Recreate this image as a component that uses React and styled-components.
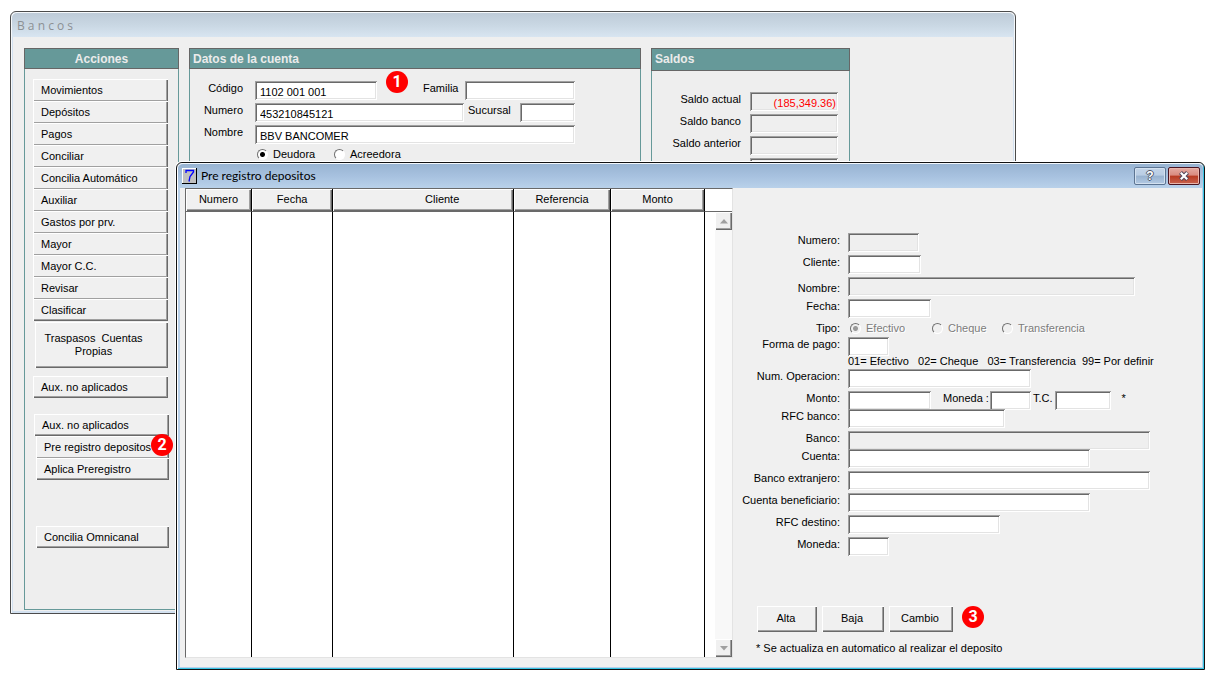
import React from 'react';
import styled, { createGlobalStyle, css } from 'styled-components';

const uiFont = '"Liberation Sans", Arial, sans-serif';

const raised = css`
  box-shadow: inset 1px 1px 0 #fff, inset -1px -1px 0 #696969, inset -2px -2px 0 #a0a0a0;
`;
const sunken = css`
  box-shadow: inset 1px 1px 0 #a0a0a0, inset -1px -1px 0 #fff,
    inset 2px 2px 0 #696969, inset -2px -2px 0 #e3e3e3;
`;

const GlobalStyle = createGlobalStyle`
  * { box-sizing: border-box; }
  body { margin: 0; background: #fff; color: #000; }
  button, input { font: inherit; color: inherit; }
`;

const Desktop = styled.main`
  position: relative;
  min-height: 100vh;
  overflow: hidden;
`;

/* ---------- Bancos window ---------- */

const BankWindow = styled.section`
  position: absolute;
  top: 11px;
  left: 10px;
  right: 199px;
  border: 1px solid #4b4b4b;
  border-radius: 6px 6px 0 0;
  background: #efefef;
  box-shadow: inset 1px 1px 0 #f5f8fb, inset 2px 0 0 #d3e1f0, inset -1px 0 0 #f5f8fb,
    inset -2px -2px 0 #d3e1f0;
  font: 11px/16px ${uiFont};
`;

const BankTitle = styled.h1`
  margin: 1px 1px 0;
  height: 24px;
  padding: 0 5px;
  border-radius: 5px 5px 0 0;
  background: linear-gradient(#becbd8, #c9d7e3 50%, #d8e5f1);
  color: #8c9094;
  font: 12px/26px "Open Sans", sans-serif;
  white-space: pre;
`;

const BankBody = styled.div`
  display: grid;
  grid-template-columns: 155px minmax(0, 1fr) 199px;
  gap: 10px;
  padding: 11px 165px 3px 13px;
`;

const Panel = styled.section`
  border: 1px solid #669999;
  border-top: 0;
  background: #eee;
`;

const PanelTitle = styled.h2`
  margin: 0 -1px;
  height: ${(p) => (p.$tall ? 23 : 21)}px;
  padding: 0 3px;
  border: 1px solid #666;
  background: #669999;
  color: #ebebeb;
  font: bold 12px/20px ${uiFont};
  text-align: ${(p) => (p.$center ? 'center' : 'left')};
`;

const ActionList = styled.nav`
  display: flex;
  flex-direction: column;
  padding: 10px 9px 61px 8px;
`;

const ActionGroup = styled.div`
  position: relative;
  display: flex;
  flex-direction: column;
  margin: 0 ${(p) => (p.$shift ? 0 : 1)}px ${(p) => p.$after || 0}px ${(p) => p.$indent || 0}px;
`;

const ActionButton = styled.button`
  height: ${(p) => (p.$tall ? 46 : 22)}px;
  padding: 0 ${(p) => (p.$tall ? 24 : 8)}px 0 8px;
  border: 0;
  background: #f0f0f0;
  text-align: ${(p) => (p.$tall ? 'center' : 'left')};
  line-height: ${(p) => (p.$tall ? 13 : 22)}px;
  white-space: pre;
  ${raised}
  &:not(:last-of-type) {
    box-shadow: inset 1px 1px 0 #fff, inset -1px 0 0 #696969, inset -2px -1px 0 #a0a0a0;
  }
`;

const Badge = styled.span`
  display: block;
  width: 22px;
  height: 22px;
  border-radius: 50%;
  background: #f00;
  color: #fff;
  font: bold 16px/21px Roboto, sans-serif;
  text-align: center;
`;

const ActionBadge = styled(Badge)`
  position: absolute;
  top: -2px;
  right: -4px;
`;

const AccountBadge = styled(Badge)`
  position: absolute;
  top: -10px;
  left: 194px;
`;

const AccountForm = styled.form`
  position: relative;
  display: flex;
  flex-direction: column;
  margin: 12px 0 0 2px;
`;

const AccountRow = styled.div`
  display: grid;
  grid-template-columns: 51px ${(p) => p.$cols};
  column-gap: 12px;
  height: 22px;
  align-items: start;
`;

const FieldLabel = styled.label`
  text-align: right;
  line-height: 15px;
  white-space: nowrap;
`;

const FamilyField = styled.div`
  display: grid;
  grid-template-columns: 32px 110px;
  justify-content: space-between;
  margin-left: 34px;
`;

const BranchFields = styled.div`
  display: grid;
  grid-template-columns: 209px 1fr 55px;
  column-gap: 4px;
  ${FieldLabel} { text-align: left; }
`;

const Field = styled.input`
  width: ${(p) => (p.$width ? `${p.$width}px` : '100%')};
  min-width: 0;
  height: 19px;
  padding: 2px 2px 0 5px;
  border: 0;
  border-radius: 0;
  outline: 0;
  background: #fff;
  text-align: ${(p) => (p.$right ? 'right' : 'left')};
  ${sunken}
  &:read-only { background: #efefef; }
`;

const RedField = styled(Field)`
  color: #f00;
`;

const RadioRow = styled.div`
  display: grid;
  grid-template-columns: ${(p) => p.$cols};
  padding-left: ${(p) => p.$indent}px;
`;

const RadioLabel = styled.label`
  display: flex;
  align-items: center;
  gap: 5px;
  height: 14px;
  ${(p) => p.$disabled && css`color: #7c7c7c; text-shadow: 1px 1px 0 #fff;`}
`;

const Radio = styled.input.attrs({ type: 'radio' })`
  appearance: none;
  width: 11px;
  height: 11px;
  margin: 0;
  border: 1px solid;
  border-color: #707070 #fff #fff #707070;
  border-radius: 50%;
  background: ${(p) => (p.disabled ? '#f0f0f0' : '#fff')};
  &:checked {
    background: radial-gradient(circle, ${(p) => (p.disabled ? '#999' : '#000')} 2px, transparent 3px),
      ${(p) => (p.disabled ? '#f0f0f0' : '#fff')};
  }
`;

const BalanceList = styled.form`
  display: grid;
  grid-template-columns: 1fr 88px;
  grid-auto-rows: 22px;
  column-gap: 9px;
  align-items: start;
  padding: 21px 11px 0;
`;

/* ---------- Pre registro dialog ---------- */

const Dialog = styled.section`
  position: absolute;
  top: 162px;
  left: 176px;
  right: 10px;
  border: 1px solid #111;
  border-radius: 6px 6px 0 0;
  background: #f0f0f0;
  box-shadow: 0 0 0 1px #fff, inset 1px 0 0 #fff, inset -1px -1px 0 #38c4e4,
    inset 3px 0 0 #b9d1ea, inset -2px -2px 0 #b9d1ea;
  font: 11px/15px ${uiFont};
`;

const DialogBar = styled.header`
  display: flex;
  align-items: center;
  height: 25px;
  margin: 0 1px;
  padding: 0 3px 0 4px;
  border-top: 1px solid #f2f7fc;
  border-radius: 5px 5px 0 0;
  background: linear-gradient(#98b4d2, #a7c1df 50%, #b9d1ea);
`;

const DialogTitle = styled.h2`
  flex: 1;
  margin: 0 0 0 4px;
  font: 12px/16px Lato, sans-serif;
`;

const CaptionButton = styled.button`
  display: flex;
  align-items: center;
  justify-content: center;
  width: 32px;
  height: 18px;
  margin-left: 2px;
  padding: 0;
  border: 1px solid ${(p) => (p.$close ? '#4b1420' : '#5c7492')};
  border-radius: 2px;
  color: #fff;
  background: ${(p) =>
    p.$close
      ? 'linear-gradient(#e5aaa1, #d98a7f 45%, #b83a22 50%, #c9634f)'
      : 'linear-gradient(#c3d4e8, #b9cde4 45%, #98b2cf 50%, #b3cae4)'};
  box-shadow: inset 0 0 0 1px ${(p) => (p.$close ? '#e9b5ac' : '#d3e1f0')};
`;

const HelpMark = styled.span`
  font: bold 12px/14px ${uiFont};
  text-shadow: 1px 0 #50586a, -1px 0 #50586a, 0 1px #50586a, 0 -1px #50586a;
`;

const DialogBody = styled.div`
  display: grid;
  grid-template-columns: minmax(0, 548fr) minmax(0, 471fr);
  padding: 0 0 11px 8px;
`;

const ListPane = styled.div`
  display: grid;
  grid-template-columns: minmax(0, 1fr) 27px;
  border: 1px solid;
  border-color: #696969 #e3e3e3 #e3e3e3 #696969;
  background: #fff;
`;

const DepositTable = styled.table`
  width: 100%;
  height: 100%;
  table-layout: fixed;
  border-collapse: separate;
  border-spacing: 0;
`;

const HeadCell = styled.th`
  width: ${(p) => p.$share}%;
  height: 23px;
  padding: 0 0 2px ${(p) => p.$pad || 0}px;
  border-right: 1px solid #000;
  border-bottom: 1px solid #696969;
  background: #f0f0f0;
  box-shadow: inset 1px 1px 0 #fff, inset -1px -1px 0 #696969, inset -2px -2px 0 #a0a0a0;
  font-weight: normal;
`;

const BodyCell = styled.td`
  padding: 0;
  border-right: 1px solid #000;
`;

const ScrollColumn = styled.div`
  display: flex;
  flex-direction: column;
  padding-top: 22px;
`;

const ScrollTrack = styled.div`
  flex: 1;
  display: flex;
  flex-direction: column;
  justify-content: space-between;
  border-top: 1px solid #696969;
  padding-left: 10px;
  background: linear-gradient(90deg, #fff 10px, #f8f8f8 10px);
`;

const ScrollButton = styled.button`
  display: flex;
  align-items: center;
  justify-content: center;
  height: 18px;
  padding: 0;
  border: 0;
  background: #f0f0f0;
  ${raised}
`;

const DepositForm = styled.form`
  padding: 45px 0 2px;
`;

const FormRow = styled.div`
  display: grid;
  grid-template-columns: 107px minmax(0, 1fr);
  column-gap: 8px;
  height: ${(p) => p.$height || 22}px;
  align-items: start;
`;

const FormLabel = styled(FieldLabel)`
  align-self: ${(p) => (p.$middle ? 'center' : 'start')};
`;

const Legend = styled.p`
  grid-column: 2;
  margin: 0;
  line-height: 16px;
  white-space: pre;
`;

const InlineFields = styled.div`
  display: flex;
  align-items: flex-start;
`;

const InlineLabel = styled(FieldLabel)`
  margin: 0 ${(p) => p.$after}px 0 ${(p) => p.$before}px;
`;

const Actions = styled.div`
  display: flex;
  align-items: flex-start;
  gap: 5px;
  margin: 47px 0 8px 24px;
`;

const PushButton = styled.button`
  width: ${(p) => p.$width}px;
  height: 26px;
  padding: 0 2px 2px 0;
  border: 0;
  background: #f0f0f0;
  ${raised}
`;

const ActionsBadge = styled(Badge)`
  margin-left: 4px;
`;

const Note = styled.p`
  margin: 0 0 0 23px;
  line-height: 16px;
`;

const actions = [
  'Movimientos', 'Depósitos', 'Pagos', 'Conciliar', 'Concilia Automático', 'Auxiliar',
  'Gastos por prv.', 'Mayor', 'Mayor C.C.', 'Revisar', 'Clasificar',
];

const columns = [
  { name: 'Numero', share: 12.7 },
  { name: 'Fecha', share: 15.7 },
  { name: 'Cliente', share: 34.8, pad: 38 },
  { name: 'Referencia', share: 18.7 },
  { name: 'Monto', share: 18.1 },
];

const AppIcon = () => (
  <svg width="15" height="16" viewBox="0 0 15 16" aria-hidden="true">
    <rect width="15" height="16" fill="#000" />
    <rect width="14" height="15" fill="#fff" />
    <rect x="1" y="1" width="13" height="14" fill="#c0c0c0" />
    <path d="M4 5V2.500H11.500V4L8 8.500L7 13.500" fill="none" stroke="#00f" strokeWidth="1.300" />
  </svg>
);

const CloseIcon = () => (
  <svg width="12" height="10" viewBox="0 0 12 10" aria-hidden="true">
    <path d="M2.500 1.500L9.500 8.500M9.500 1.500L2.500 8.500" stroke="#50455a" strokeWidth="4.200" />
    <path d="M2.800 1.800L9.200 8.200M9.200 1.800L2.800 8.200" stroke="#fff" strokeWidth="2.200" />
  </svg>
);

const Arrow = ({ down }) => (
  <svg width="8" height="5" viewBox="0 0 8 5" aria-hidden="true">
    <path d={down ? 'M0 0H8L4 4.500Z' : 'M0 4.500H8L4 0Z'} fill="#a0a0a0" />
  </svg>
);

function FormField({ id, label, width, height, middle, readOnly }) {
  return (
    <FormRow $height={height}>
      <FormLabel htmlFor={id} $middle={middle}>{label}</FormLabel>
      <Field id={id} $width={width} readOnly={readOnly} />
    </FormRow>
  );
}

function Balance({ id, label, value = '' }) {
  return (
    <>
      <FieldLabel htmlFor={id}>{label}</FieldLabel>
      <RedField id={id} $right readOnly value={value} />
    </>
  );
}

function Bancos() {
  return (
    <BankWindow>
      <BankTitle>B a n c o s</BankTitle>
      <BankBody>
        <Panel>
          <PanelTitle $center>Acciones</PanelTitle>
          <ActionList>
            <ActionGroup $after={1}>
              {actions.map((name) => <ActionButton key={name}>{name}</ActionButton>)}
            </ActionGroup>
            <ActionGroup $indent={2} $after={8}>
              <ActionButton $tall>{'Traspasos  Cuentas\nPropias'}</ActionButton>
            </ActionGroup>
            <ActionGroup $after={16}>
              <ActionButton>Aux. no aplicados</ActionButton>
            </ActionGroup>
            <ActionGroup $shift $indent={1}>
              <ActionButton>Aux. no aplicados</ActionButton>
            </ActionGroup>
            <ActionGroup $shift $indent={3} $after={46}>
              <ActionButton>Pre registro depositos</ActionButton>
              <ActionButton>Aplica Preregistro</ActionButton>
              <ActionBadge>2</ActionBadge>
            </ActionGroup>
            <ActionGroup $shift $indent={3}>
              <ActionButton>Concilia Omnicanal</ActionButton>
            </ActionGroup>
          </ActionList>
        </Panel>

        <Panel>
          <PanelTitle>Datos de la cuenta</PanelTitle>
          <AccountForm>
            <AccountRow $cols="122px 186px">
              <FieldLabel htmlFor="codigo">Código</FieldLabel>
              <Field id="codigo" defaultValue="1102 001 001" />
              <FamilyField>
                <FieldLabel htmlFor="familia">Familia</FieldLabel>
                <Field id="familia" />
              </FamilyField>
            </AccountRow>
            <AccountBadge>1</AccountBadge>
            <AccountRow $cols="320px">
              <FieldLabel htmlFor="cuenta-numero">Numero</FieldLabel>
              <BranchFields>
                <Field id="cuenta-numero" defaultValue="453210845121" />
                <FieldLabel htmlFor="sucursal">Sucursal</FieldLabel>
                <Field id="sucursal" />
              </BranchFields>
            </AccountRow>
            <AccountRow $cols="320px">
              <FieldLabel htmlFor="cuenta-nombre">Nombre</FieldLabel>
              <Field id="cuenta-nombre" defaultValue="BBV BANCOMER" />
            </AccountRow>
            <RadioRow $cols="77px auto" $indent={65}>
              <RadioLabel><Radio name="naturaleza" defaultChecked />Deudora</RadioLabel>
              <RadioLabel><Radio name="naturaleza" />Acreedora</RadioLabel>
            </RadioRow>
          </AccountForm>
        </Panel>

        <Panel>
          <PanelTitle $tall>Saldos</PanelTitle>
          <BalanceList>
            <Balance id="actual" label="Saldo actual" value="(185,349.36)" />
            <Balance id="banco-saldo" label="Saldo banco" />
            <Balance id="anterior" label="Saldo anterior" />
            <Balance id="medio" label="Saldo medio" />
          </BalanceList>
        </Panel>
      </BankBody>
    </BankWindow>
  );
}

function PreRegistro() {
  return (
    <Dialog role="dialog" aria-labelledby="dialog-title">
      <DialogBar>
        <AppIcon />
        <DialogTitle id="dialog-title">Pre registro depositos</DialogTitle>
        <CaptionButton aria-label="Ayuda"><HelpMark>?</HelpMark></CaptionButton>
        <CaptionButton $close aria-label="Cerrar"><CloseIcon /></CaptionButton>
      </DialogBar>
      <DialogBody>
        <ListPane>
          <DepositTable>
            <thead>
              <tr>
                {columns.map((c) => (
                  <HeadCell key={c.name} $share={c.share} $pad={c.pad}>{c.name}</HeadCell>
                ))}
              </tr>
            </thead>
            <tbody>
              <tr>{columns.map((c) => <BodyCell key={c.name} />)}</tr>
            </tbody>
          </DepositTable>
          <ScrollColumn>
            <ScrollTrack>
              <ScrollButton aria-label="Subir"><Arrow /></ScrollButton>
              <ScrollButton aria-label="Bajar"><Arrow down /></ScrollButton>
            </ScrollTrack>
          </ScrollColumn>
        </ListPane>

        <DepositForm onSubmit={(e) => e.preventDefault()}>
          <FormField id="numero" label="Numero:" width={71} readOnly />
          <FormField id="cliente" label="Cliente:" width={73} />
          <FormField id="nombre" label="Nombre:" width={287} middle readOnly />
          <FormField id="fecha" label="Fecha:" width={83} />
          <FormRow $height={16}>
            <FormLabel as="span">Tipo:</FormLabel>
            <RadioRow $cols="82px 70px auto" $indent={2}>
              <RadioLabel $disabled><Radio name="tipo" disabled defaultChecked />Efectivo</RadioLabel>
              <RadioLabel $disabled><Radio name="tipo" disabled />Cheque</RadioLabel>
              <RadioLabel $disabled><Radio name="tipo" disabled />Transferencia</RadioLabel>
            </RadioRow>
          </FormRow>
          <FormField id="forma" label="Forma de pago:" width={41} height={16} />
          <FormRow $height={16}>
            <Legend>01= Efectivo   02= Cheque   03= Transferencia  99= Por definir</Legend>
          </FormRow>
          <FormField id="operacion" label="Num. Operacion:" width={183} />
          <FormRow $height={18}>
            <FormLabel htmlFor="monto">Monto:</FormLabel>
            <InlineFields>
              <Field id="monto" $width={83} />
              <InlineLabel htmlFor="moneda-monto" $before={12} $after={1}>Moneda :</InlineLabel>
              <Field id="moneda-monto" $width={41} />
              <InlineLabel htmlFor="tc" $before={2} $after={3}>T.C.</InlineLabel>
              <Field id="tc" $width={56} />
              <InlineLabel as="span" $before={10} $after={0}>*</InlineLabel>
            </InlineFields>
          </FormRow>
          <FormField id="rfc-banco" label="RFC banco:" width={157} />
          <FormField id="banco" label="Banco:" width={302} height={18} readOnly />
          <FormField id="cuenta" label="Cuenta:" width={242} />
          <FormField id="extranjero" label="Banco extranjero:" width={302} />
          <FormField id="beneficiario" label="Cuenta beneficiario:" width={242} />
          <FormField id="rfc-destino" label="RFC destino:" width={152} />
          <FormField id="moneda" label="Moneda:" width={41} />
          <Actions>
            <PushButton type="button" $width={60}>Alta</PushButton>
            <PushButton type="button" $width={62}>Baja</PushButton>
            <PushButton type="button" $width={64}>Cambio</PushButton>
            <ActionsBadge>3</ActionsBadge>
          </Actions>
          <Note>* Se actualiza en automatico al realizar el deposito</Note>
        </DepositForm>
      </DialogBody>
    </Dialog>
  );
}

export default function App() {
  return (
    <Desktop>
      <GlobalStyle />
      <Bancos />
      <PreRegistro />
    </Desktop>
  );
}
